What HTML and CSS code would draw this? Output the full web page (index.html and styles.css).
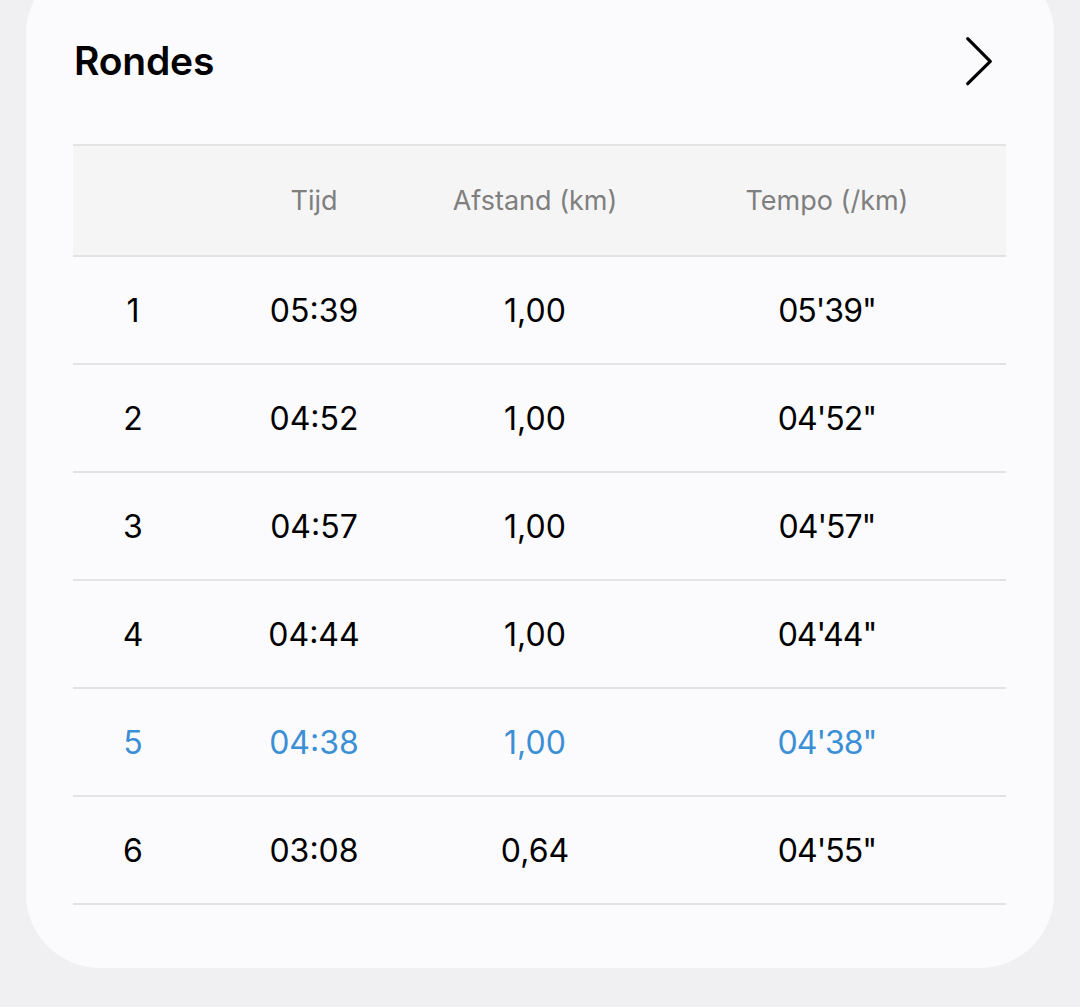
FILE: index.html
```html
<!DOCTYPE html>
<html lang="nl">
<head>
<meta charset="utf-8">
<link rel="stylesheet" href="styles.css">
</head>
<body>
<section class="card">
  <div class="card-head">
    <h2 class="title">Rondes</h2>
    <svg class="chev" width="40" height="60" viewBox="0 0 40 60" aria-hidden="true">
      <path d="M7.7 7.7 L30.3 30.3 L7.7 52.7" fill="none" stroke="#000" stroke-width="3.2" stroke-linecap="round" stroke-linejoin="round"/>
    </svg>
  </div>
  <div class="table">
    <div class="row head">
      <div class="c c1"></div>
      <div class="c c2">Tijd</div>
      <div class="c c3">Afstand (km)</div>
      <div class="c c4">Tempo (/km)</div>
    </div>
    <div class="row">
      <div class="c c1">1</div><div class="c c2">05:39</div><div class="c c3">1,00</div><div class="c c4 pace">05'39"</div>
    </div>
    <div class="row">
      <div class="c c1">2</div><div class="c c2">04:52</div><div class="c c3">1,00</div><div class="c c4 pace">04'52"</div>
    </div>
    <div class="row">
      <div class="c c1">3</div><div class="c c2">04:57</div><div class="c c3">1,00</div><div class="c c4 pace">04'57"</div>
    </div>
    <div class="row">
      <div class="c c1">4</div><div class="c c2">04:44</div><div class="c c3">1,00</div><div class="c c4 pace">04'44"</div>
    </div>
    <div class="row best">
      <div class="c c1">5</div><div class="c c2">04:38</div><div class="c c3">1,00</div><div class="c c4 pace">04'38"</div>
    </div>
    <div class="row">
      <div class="c c1">6</div><div class="c c2">03:08</div><div class="c c3">0,64</div><div class="c c4 pace">04'55"</div>
    </div>
  </div>
</section>
</body>
</html>
```

FILE: styles.css
```css
html, body {
  margin: 0;
  padding: 0;
  background: #f0f0f2;
  height: 100%;
  overflow: hidden;
}
body {
  font-family: Inter, Roboto, "Noto Sans", sans-serif;
  color: #000;
}
.card {
  margin: -40px 26px 0;
  padding: 40px 48px 63px 47px;
  background: #fbfbfd;
  border-radius: 74px;
}
.card-head {
  height: 122px;
  margin-bottom: 22px;
  display: flex;
  align-items: center;
  justify-content: space-between;
  padding-left: 1px;
}
.title {
  margin: 0 0 2px;
  font-size: 39px;
  font-weight: 600;
  letter-spacing: -0.2px;
}
.chev {
  margin-right: 6px;
  display: block;
}
.table {
  border-top: 2px solid #e3e3e3;
}
.row {
  display: grid;
  grid-template-columns: 120px 242px 200px 1fr;
  height: 106px;
  align-items: center;
  border-bottom: 2px solid #e3e3e3;
  font-size: 32px;
  font-weight: 400;
  text-align: center;
}
.row.head {
  height: 109px;
  background: #f5f5f5;
  color: #7f7f7f;
  font-size: 27px;
}
.c4 {
  padding-left: 13px;
}
.pace {
  letter-spacing: -1px;
}
.row.best {
  color: #3b8fd5;
}
```
